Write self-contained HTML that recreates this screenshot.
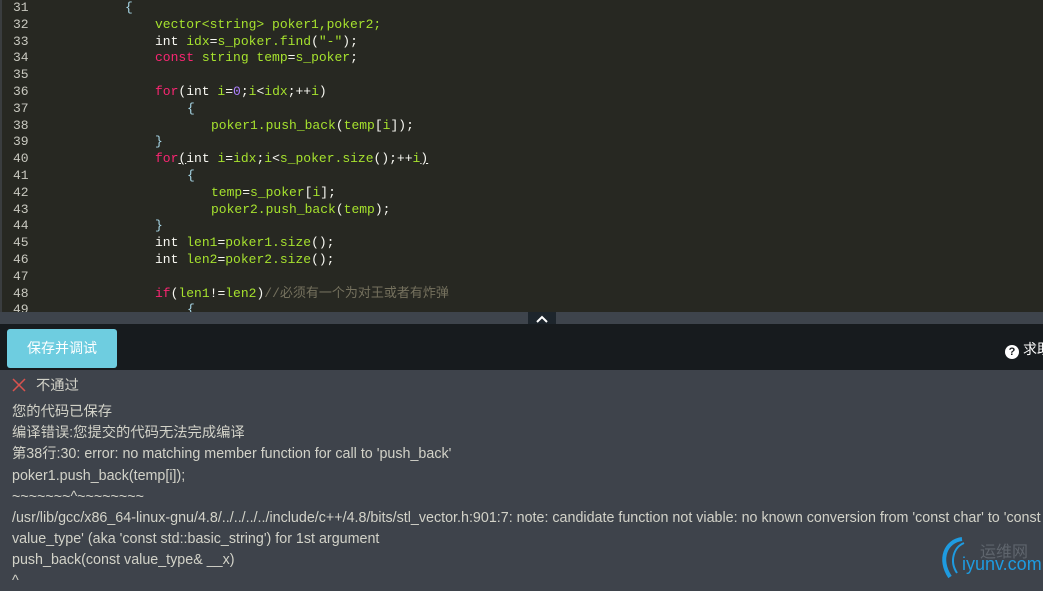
<!DOCTYPE html>
<html><head><meta charset="utf-8"><style>
*{margin:0;padding:0;box-sizing:border-box}
body{width:1043px;height:582px;overflow:hidden;background:#3e434b;position:relative;font-family:"Liberation Sans","Noto Sans CJK SC",sans-serif}
#code{position:absolute;left:0;top:0;width:1043px;height:312px;background:#272822;border-left:2px solid #3a3d3f;overflow:hidden}
.l{position:absolute;left:0;height:17px;font:13px/17px "Liberation Mono","Noto Sans CJK SC",monospace;white-space:pre;color:#f8f8f2}
.n{position:absolute;left:11px;color:#c9c9c0}
.c{position:absolute}
.g{color:#a6e22e}.p{color:#f92672}.v{color:#ae81ff}.m{color:#75715e}.b{color:#a8d8e8}
#bar{position:absolute;left:0;top:312px;width:1043px;height:12px;background:#3e444c}
#chev{position:absolute;left:528px;top:312px;width:28px;height:12px;background:#1d252c}
#tb{position:absolute;left:0;top:324px;width:1043px;height:46px;background:#171b1e}
#btn{position:absolute;left:7px;top:329px;width:110px;height:39px;background:#6ecde0;border-radius:3px;color:#fff;font-size:14px;line-height:39px;text-align:center}
#help{position:absolute;left:1005px;top:339px;color:#fff;font-size:14px;white-space:nowrap}
#help i{display:inline-block;width:14px;height:14px;border-radius:50%;background:#fff;color:#171b1e;font-style:normal;font-weight:bold;font-size:11px;line-height:14px;text-align:center;vertical-align:-1px;margin-right:4px}
.t{position:absolute;left:12px;color:#d2d2c8;font-size:14.3px;white-space:nowrap;line-height:20px}
</style></head><body>
<div id="code">
<div class="l" style="top:-1px"><span class="n">31</span><span class="c b" style="left:123px">{</span></div>
<div class="l" style="top:15.8px"><span class="n">32</span><span class="c g" style="left:153px">vector&lt;string&gt; poker1,poker2;</span></div>
<div class="l" style="top:32.6px"><span class="n">33</span><span class="c" style="left:153px">int <span class="g">idx</span>=<span class="g">s_poker.find</span>(<span class="g">"-"</span>);</span></div>
<div class="l" style="top:49.4px"><span class="n">34</span><span class="c" style="left:153px"><span class="p">const</span> <span class="g">string temp</span>=<span class="g">s_poker</span>;</span></div>
<div class="l" style="top:66.2px"><span class="n">35</span></div>
<div class="l" style="top:83px"><span class="n">36</span><span class="c" style="left:153px"><span class="p">for</span>(int <span class="g">i</span>=<span class="v">0</span>;<span class="g">i</span>&lt;<span class="g">idx</span>;++<span class="g">i</span>)</span></div>
<div class="l" style="top:99.8px"><span class="n">37</span><span class="c b" style="left:185px">{</span></div>
<div class="l" style="top:116.6px"><span class="n">38</span><span class="c" style="left:209px"><span class="g">poker1.push_back</span>(<span class="g">temp</span>[<span class="g">i</span>]);</span></div>
<div class="l" style="top:133.4px"><span class="n">39</span><span class="c b" style="left:153px">}</span></div>
<div class="l" style="top:150.2px"><span class="n">40</span><span class="c" style="left:153px"><span class="p">for</span><u>(</u>int <span class="g">i</span>=<span class="g">idx</span>;<span class="g">i</span>&lt;<span class="g">s_poker.size</span>();++<span class="g">i</span><u>)</u></span></div>
<div class="l" style="top:167px"><span class="n">41</span><span class="c b" style="left:185px">{</span></div>
<div class="l" style="top:183.8px"><span class="n">42</span><span class="c" style="left:209px"><span class="g">temp</span>=<span class="g">s_poker</span>[<span class="g">i</span>];</span></div>
<div class="l" style="top:200.6px"><span class="n">43</span><span class="c" style="left:209px"><span class="g">poker2.push_back</span>(<span class="g">temp</span>);</span></div>
<div class="l" style="top:217.4px"><span class="n">44</span><span class="c b" style="left:153px">}</span></div>
<div class="l" style="top:234.2px"><span class="n">45</span><span class="c" style="left:153px">int <span class="g">len1</span>=<span class="g">poker1.size</span>();</span></div>
<div class="l" style="top:251px"><span class="n">46</span><span class="c" style="left:153px">int <span class="g">len2</span>=<span class="g">poker2.size</span>();</span></div>
<div class="l" style="top:267.8px"><span class="n">47</span></div>
<div class="l" style="top:284.6px"><span class="n">48</span><span class="c" style="left:153px"><span class="p">if</span>(<span class="g">len1</span>!=<span class="g">len2</span>)<span class="m">//必须有一个为对王或者有炸弹</span></span></div>
<div class="l" style="top:301.4px"><span class="n">49</span><span class="c b" style="left:185px">{</span></div>
</div>
<div id="bar"></div>
<div id="chev"><svg width="28" height="12"><path d="M9 9 L14 4 L19 9" stroke="#fff" stroke-width="2" fill="none"/></svg></div>
<div id="tb"></div>
<div id="btn">保存并调试</div>
<div id="help"><i>?</i>求助</div>
<svg style="position:absolute;left:12px;top:378px" width="14" height="14"><path d="M1 1L13 13M13 1L1 13" stroke="#d9534f" stroke-width="1.5"/></svg>
<div class="t" style="left:36px;top:376px">不通过</div>
<div class="t" style="top:402px">您的代码已保存</div>
<div class="t" style="top:423px">编译错误:您提交的代码无法完成编译</div>
<div class="t" style="top:444px">第38行:30: error: no matching member function for call to 'push_back'</div>
<div class="t" style="top:466px">poker1.push_back(temp[i]);</div>
<div class="t" style="top:487px">~~~~~~~^~~~~~~~~</div>
<div class="t" style="top:508px">/usr/lib/gcc/x86_64-linux-gnu/4.8/../../../../include/c++/4.8/bits/stl_vector.h:901:7: note: candidate function not viable: no known conversion from 'const char' to 'const</div>
<div class="t" style="top:529px">value_type' (aka 'const std::basic_string') for 1st argument</div>
<div class="t" style="top:550px">push_back(const value_type&amp; __x)</div>
<div class="t" style="top:571px">^</div>
<svg style="position:absolute;left:938px;top:535px" width="44" height="47"><path d="M24 4 C8 6 0 24 12 42" stroke="#1e9be0" stroke-width="4" fill="none"/><path d="M26 8 C16 12 11 26 19 38" stroke="#1e9be0" stroke-width="2" fill="none"/></svg>
<div style="position:absolute;left:980px;top:538px;color:#5f656d;font-size:16px">运维网</div>
<div style="position:absolute;left:962px;top:554px;color:#1e9be0;font-size:18px">iyunv.com</div>
</body></html>
